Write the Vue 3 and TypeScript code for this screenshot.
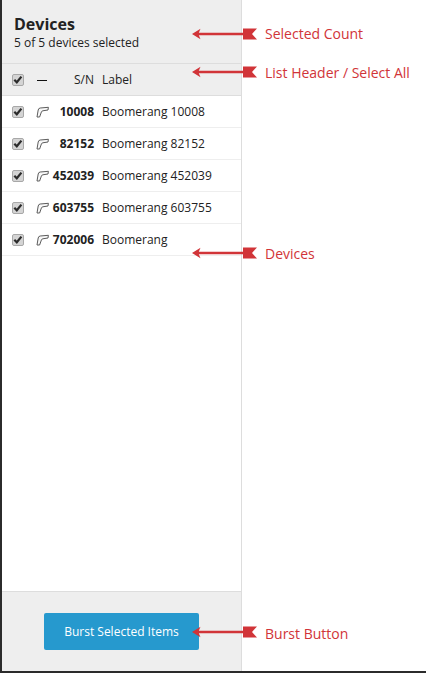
<script setup lang="ts">
interface Device { sn: string; label: string }
const devices: Device[] = [
  { sn: '10008', label: 'Boomerang 10008' },
  { sn: '82152', label: 'Boomerang 82152' },
  { sn: '452039', label: 'Boomerang 452039' },
  { sn: '603755', label: 'Boomerang 603755' },
  { sn: '702006', label: 'Boomerang' },
]
const notes = [
  { text: 'Selected Count', cls: 'n1' },
  { text: 'List Header / Select All', cls: 'n2' },
  { text: 'Devices', cls: 'n3' },
  { text: 'Burst Button', cls: 'n4' },
]
</script>

<template>
  <div class="page">
    <aside class="panel">
      <header class="head">
        <h1>Devices</h1>
        <p>5 of 5 devices selected</p>
      </header>
      <div class="row list-head">
        <span class="check"><svg viewBox="0 0 12 12" width="12" height="12"><path d="M2.3 5.8 L4.8 8.3 L9.4 2.6" fill="none" stroke="#2b2b2b" stroke-width="2.2"/></svg></span>
        <span class="type"><i class="dash"></i></span>
        <span class="sn plain">S/N</span>
        <span class="label">Label</span>
      </div>
      <ul class="list">
        <li v-for="d in devices" :key="d.sn" class="row item">
          <span class="check"><svg viewBox="0 0 12 12" width="12" height="12"><path d="M2.3 5.8 L4.8 8.3 L9.4 2.6" fill="none" stroke="#2b2b2b" stroke-width="2.2"/></svg></span>
          <span class="type">
            <svg viewBox="0 0 13 12" width="13" height="12"><path d="M1 11 L2.2 4 Q2.5 2.2 4.2 2 L12.4 1.3 L12 4 L6.8 4.8 Q5.8 5 5.4 6 L3.6 11 Z" fill="#f8f8f8" stroke="#5c5c5c" stroke-width="1" stroke-linejoin="round"/></svg>
          </span>
          <span class="sn">{{ d.sn }}</span>
          <span class="label">{{ d.label }}</span>
        </li>
      </ul>
      <footer class="foot">
        <button type="button" class="burst">Burst Selected Items</button>
      </footer>
    </aside>
    <div v-for="n in notes" :key="n.text" class="note" :class="n.cls">
      <svg class="arrow" viewBox="0 0 65 12" width="65" height="12">
        <path d="M0 6 L8.5 0.8 L6.8 4.8 H53 V7.2 H6.8 L8.5 11.2 Z" fill="#d13438"/>
        <path d="M51 0.5 H65 L60 6 L65 11.5 H51 Z" fill="#d13438"/>
      </svg>
      <span>{{ n.text }}</span>
    </div>
  </div>
</template>

<style>
html, body { margin: 0; background: #fff; }
</style>

<style scoped>
.page {
  position: relative;
  box-sizing: border-box;
  width: 426px;
  height: 673px;
  border-bottom: 2px solid #2b2b2b;
  background: #fff;
  font-family: "Open Sans", sans-serif;
  color: #222;
  overflow: hidden;
}
.panel {
  box-sizing: border-box;
  width: 242px;
  height: 671px;
  display: flex;
  flex-direction: column;
  border-left: 2px solid #2b2b2b;
  border-right: 1px solid #ddd;
}
.head {
  box-sizing: border-box;
  height: 64px;
  padding: 13px 12px 0;
  background: #eee;
  border-bottom: 1px solid #ddd;
}
.head h1 {
  margin: 0;
  font-size: 16px;
  line-height: 22px;
  font-weight: 700;
}
.head p {
  margin: 0;
  font-size: 12px;
  line-height: 15px;
}
.row {
  box-sizing: border-box;
  height: 32px;
  display: flex;
  align-items: center;
  font-size: 12px;
}
.list-head { background: #eee; border-bottom: 1px solid #ddd; }
.item { border-bottom: 1px solid #eee; }
.check {
  box-sizing: border-box;
  flex: none;
  width: 12px;
  height: 12px;
  margin-left: 10px;
  background: #d4d4d4;
  border: 1px solid #a8a8a8;
  border-radius: 2px;
  display: flex;
  align-items: center;
  justify-content: center;
}
.check svg { flex: none; }
.type {
  flex: none;
  width: 15px;
  margin-left: 12px;
  display: flex;
  align-items: center;
}
.dash { display: block; width: 10px; height: 1px; margin: 1px 0 0 1px; background: #111; }
.sn {
  flex: none;
  width: 43px;
  text-align: right;
  font-weight: 700;
}
.sn.plain { font-weight: 400; }
.label { margin-left: 8px; }
.list { margin: 0; padding: 0; list-style: none; flex: 1; }
.foot {
  box-sizing: border-box;
  height: 80px;
  background: #eee;
  border-top: 1px solid #ddd;
  padding: 21px 0 0 42px;
}
.burst {
  display: block;
  width: 155px;
  height: 37px;
  padding: 0;
  border: 0;
  border-radius: 2px;
  background: #2699ce;
  color: #fff;
  font-family: inherit;
  font-size: 12px;
}
.note {
  position: absolute;
  left: 192px;
  display: flex;
  align-items: center;
  color: #d13438;
  font-size: 14px;
  line-height: 20px;
}
.arrow { flex: none; margin-right: 8px; }
.n1 { top: 24px; }
.n2 { top: 63px; }
.n3 { top: 244px; }
.n4 { top: 624px; }
.n2 .arrow { transform: translateY(-1px); }
.n3 .arrow { transform: translateY(-1px); }
.n4 .arrow { transform: translateY(-2px); }
</style>
